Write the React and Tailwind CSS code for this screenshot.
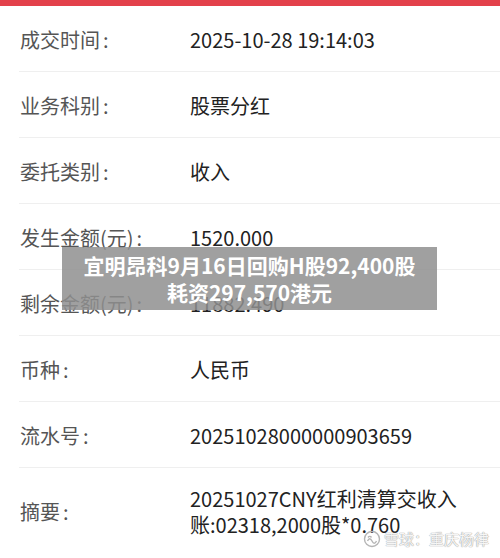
import React from 'react';

const rows = [
  { label: '成交时间', value: '2025-10-28 19:14:03' },
  { label: '业务科别', value: '股票分红' },
  { label: '委托类别', value: '收入' },
  { label: '发生金额(元)', value: '1520.000' },
  { label: '剩余金额(元)', value: '11882.490' },
  { label: '币种', value: '人民币' },
  { label: '流水号', value: '20251028000000903659' },
];

const font = { fontFamily: '"Noto Sans CJK SC", "Noto Sans", sans-serif' };

export default function App() {
  return (
    <div className="relative w-[500px] h-[558px] overflow-hidden bg-white" style={font}>
      {/* top red strip */}
      <div className="h-[6px] bg-[#e3414b]" />

      <div className="pl-[19px]">
        {rows.map((r) => (
          <div key={r.label} className="flex items-center h-[66px] border-b border-[#efefef] pt-[2px]">
            <div className="w-[171px] pl-[1px] text-[20px] text-[#555555] whitespace-nowrap">
              {r.label}<span className="ml-[3px]">:</span>
            </div>
            <div className="text-[20px] text-[#222222] whitespace-nowrap">{r.value}</div>
          </div>
        ))}

        {/* summary row, two lines */}
        <div className="flex items-center pt-[18px]">
          <div className="w-[171px] pl-[1px] text-[20px] text-[#555555]">
            摘要<span className="ml-[3px]">:</span>
          </div>
          <div className="text-[20px] leading-[26px] text-[#222222]">
            <div>20251027CNY红利清算交收入</div>
            <div>账:02318,2000股*0.760</div>
          </div>
        </div>
      </div>

      {/* headline overlay */}
      <div className="absolute left-[62px] top-[247px] w-[375px] h-[63px] bg-[#8f8f8f]/85 flex flex-col items-center justify-center text-white font-bold text-[21px] leading-[27px] whitespace-nowrap">
        <div>宜明昂科9月16日回购H股92,400股</div>
        <div>耗资297,570港元</div>
      </div>

      {/* watermark */}
      <div
        className="absolute left-[363px] top-[529px] flex items-center gap-[3px] text-[15px] leading-[20px] text-white/90 whitespace-nowrap"
        style={{ textShadow: '0 0 1px #9a9a9a, 0 0 1px #9a9a9a' }}
      >
        <svg width="18" height="18" viewBox="0 0 18 18" fill="none" stroke="#b5b5b5" strokeWidth="1.4">
          <circle cx="9" cy="9" r="7.5" />
          <path d="M4.5 11c1.5-3 3-3 4.5 0s3 3 4.5 0" />
          <path d="M5 7.5c1-1.5 2.5-1.5 3.5 0" />
        </svg>
        <span>雪球：重庆杨律</span>
      </div>
    </div>
  );
}
